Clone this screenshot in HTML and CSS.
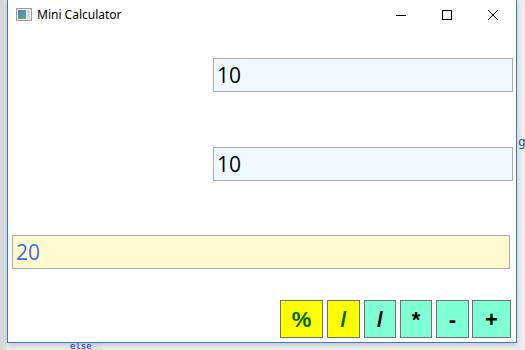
FILE: index.html
```html
<!DOCTYPE html>
<html>
<head>
<meta charset="utf-8">
<link rel="stylesheet" href="styles.css">
</head>
<body>
<div class="desktop">
  <span class="behind behind-g">g</span>
  <span class="behind behind-else">else</span>
  <div class="window">
    <div class="titlebar">
      <svg class="app-icon" width="16" height="13" viewBox="0 0 16 13">
        <defs>
          <linearGradient id="ig" x1="0" y1="0" x2="1" y2="1">
            <stop offset="0" stop-color="#4a7fb0"/>
            <stop offset="1" stop-color="#5fae8e"/>
          </linearGradient>
        </defs>
        <rect x="0.5" y="0.5" width="15" height="12" fill="#f4f4f4" stroke="#9c9c9c"/>
        <rect x="2" y="2" width="8" height="9" fill="url(#ig)"/>
        <rect x="11" y="2" width="3" height="9" fill="#d8d8d8"/>
      </svg>
      <span class="title">Mini Calculator</span>
      <div class="controls">
        <div class="ctl">
          <svg width="10" height="10" viewBox="0 0 10 10"><path d="M0 5.5H10" stroke="#000" stroke-width="1"/></svg>
        </div>
        <div class="ctl">
          <svg width="10" height="10" viewBox="0 0 10 10"><rect x="0.5" y="0.5" width="9" height="9" fill="none" stroke="#000" stroke-width="1"/></svg>
        </div>
        <div class="ctl">
          <svg width="10" height="10" viewBox="0 0 10 10"><path d="M0 0L10 10M10 0L0 10" stroke="#000" stroke-width="1"/></svg>
        </div>
      </div>
    </div>
    <div class="client">
      <div class="field field-a">10</div>
      <div class="field field-b">10</div>
      <div class="result">20</div>
      <div class="buttons">
        <div class="btn btn-yellow w-pct">%</div>
        <div class="btn btn-yellow w-33">/</div>
        <div class="btn btn-aqua w-32">/</div>
        <div class="btn btn-aqua w-32">*</div>
        <div class="btn btn-aqua w-33">-</div>
        <div class="btn btn-aqua w-plus">+</div>
      </div>
    </div>
  </div>
</div>
</body>
</html>
```
FILE: styles.css
```css
html, body {
  margin: 0;
  padding: 0;
}
body {
  width: 525px;
  height: 350px;
  overflow: hidden;
}
.desktop {
  position: relative;
  width: 525px;
  height: 350px;
  background: linear-gradient(to right, #d2d4d6 0px, #e4e5e6 7px, #eeeeee 7px);
  padding-left: 7px;
  box-sizing: border-box;
}
.behind {
  position: absolute;
  font-family: "DejaVu Sans Mono", monospace;
}
.behind-g {
  left: 518px;
  top: 134px;
  font-size: 13px;
  line-height: 15px;
  color: #2b5f6a;
}
.behind-else {
  left: 70px;
  top: 342px;
  font-size: 9px;
  line-height: 8px;
  color: #1a1adf;
  background: #e6e6e6;
  padding-right: 10px;
}
.window {
  position: relative;
  width: 510px;
  height: 343px;
  box-sizing: border-box;
  background: #ffffff;
  border: 1px solid #2b7fd4;
  border-top: none;
  display: flex;
  flex-direction: column;
  box-shadow: 0 2px 6px rgba(0,0,0,0.18);
}
.titlebar {
  height: 31px;
  display: flex;
  align-items: center;
  padding-left: 8px;
  flex: none;
}
.app-icon {
  display: block;
  margin-top: -2px;
}
.title {
  font-family: "Noto Sans", "Open Sans", sans-serif;
  font-size: 12px;
  color: #000;
  margin-left: 5px;
  margin-top: -2px;
}
.controls {
  margin-left: auto;
  display: flex;
  height: 30px;
  align-self: flex-start;
}
.ctl {
  width: 46px;
  height: 30px;
  display: flex;
  align-items: center;
  justify-content: center;
}
.ctl svg {
  display: block;
}
.client {
  flex: 1;
  display: flex;
  flex-direction: column;
  padding-top: 27px;
}
.field, .result {
  box-sizing: border-box;
  height: 34px;
  border: 1px solid #abadb3;
  font-family: "Open Sans", "Noto Sans", sans-serif;
  font-size: 21px;
  line-height: 27px;
  padding: 3px 3px 0 3px;
}
.field {
  margin-left: 205px;
  width: 300px;
  background: #f0f8ff;
  color: #000;
}
.field-b {
  margin-top: 55px;
}
.result {
  margin-top: 54px;
  margin-left: 4px;
  width: 498px;
  background: #fffacd;
  color: #4169e1;
}
.buttons {
  margin-top: 31px;
  display: flex;
  justify-content: flex-end;
  margin-right: 5px;
  gap: 4px;
}
.btn {
  box-sizing: border-box;
  height: 38px;
  border: 1px solid #707070;
  display: flex;
  align-items: center;
  justify-content: center;
  font-family: "Liberation Sans", Arial, sans-serif;
  font-weight: bold;
  font-size: 22px;
  color: #000;
  padding-top: 2px;
}
.btn-yellow {
  background: #ffff00;
  color: #006400;
}
.btn-aqua {
  background: #7fffd4;
}
.w-pct { width: 43px; }
.w-33 { width: 33px; }
.w-32 { width: 32px; }
.w-plus { width: 39px; margin-left: -1px; }
```
